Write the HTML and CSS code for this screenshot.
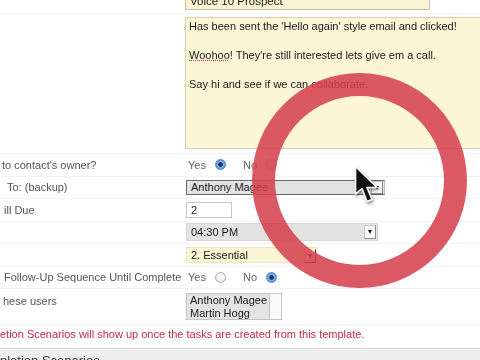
FILE: index.html
```html
<!DOCTYPE html>
<html>
<head>
  <meta charset="utf-8">
  <title>Task Template</title>
  <link rel="stylesheet" href="styles.css">
</head>
<body>
  <div class="page">
    <div class="row row-top">
      <div class="label"></div>
      <div class="field"><div class="input subject">Voice 10 Prospect</div></div>
    </div>
    <div class="row row-notes">
      <div class="label"></div>
      <div class="field">
        <div class="textarea">Has been sent the 'Hello again' style email and clicked!<br><br><span class="typo">Woohoo</span>! They're still interested lets give em a call.<br><br>Say hi and see if we can collaborate.</div>
      </div>
    </div>
    <div class="row row-std">
      <div class="label ind-2">to contact's owner?</div>
      <div class="field radios">
        <span>Yes</span><span class="radio on"></span>
        <span class="no">No</span><span class="radio"></span>
      </div>
    </div>
    <div class="row row-std">
      <div class="label ind-7">To: (backup)</div>
      <div class="field"><div class="select owner">Anthony Magee<span class="arrow">&#9662;</span></div></div>
    </div>
    <div class="row row-std">
      <div class="label ind-4">ill Due</div>
      <div class="field"><div class="input days">2</div></div>
    </div>
    <div class="row row-std">
      <div class="label"></div>
      <div class="field"><div class="select time">04:30 PM<span class="arrow">&#9662;</span></div></div>
    </div>
    <div class="row row-std">
      <div class="label"></div>
      <div class="field"><div class="select priority">2. Essential<span class="arrow">&#9662;</span></div></div>
    </div>
    <div class="row row-std">
      <div class="label ind-4">Follow-Up Sequence Until Complete</div>
      <div class="field radios">
        <span>Yes</span><span class="radio"></span>
        <span class="no">No</span><span class="radio on"></span>
      </div>
    </div>
    <div class="row row-users">
      <div class="label ind-3">hese users</div>
      <div class="field">
        <div class="listbox">
          <div class="options">Anthony Magee<br>Martin Hogg</div>
          <div class="scroll"></div>
        </div>
      </div>
    </div>
    <div class="notice">etion Scenarios will show up once the tasks are created from this template.</div>
    <div class="section-bar">pletion Scenarios</div>
  </div>

  <div class="highlight"></div>
  <svg class="cursor" width="26" height="40" viewBox="0 0 26 40">
    <path d="M1.5 1.5 L1.5 29 L8 23.5 L13 36.5 L18 34.5 L13 22.5 L23 22.5 Z" fill="#111" stroke="#fff" stroke-width="1.6" stroke-linejoin="round"/>
  </svg>
</body>
</html>
```

FILE: styles.css
```css
body {
  margin: 0;
  width: 480px;
  height: 360px;
  overflow: hidden;
  position: relative;
  background: #fff;
  color: #555;
  font-family: "Liberation Sans", Arial, sans-serif;
  font-size: 11px;
}
.page {
  margin-top: -7px;
  filter: blur(0.3px);
}
.row {
  display: flex;
  align-items: center;
  border-bottom: 1px solid #f3f3f3;
}
.label {
  box-sizing: border-box;
  width: 185px;
  flex: none;
  white-space: nowrap;
}
.ind-2 { padding-left: 2px; }
.ind-3 { padding-left: 3px; }
.ind-4 { padding-left: 4px; }
.ind-7 { padding-left: 7px; }
.field {
  flex: 1;
  display: flex;
  align-items: center;
  min-width: 0;
}
.row-top {
  height: 20px;
  align-items: flex-start;
}
.row-notes {
  padding: 3px 0 4px;
}
.row-std {
  height: 21.5px;
}
.row-users {
  padding: 4px 0;
  align-items: flex-start;
}
.row-users .label {
  padding-top: 2px;
}

.input {
  box-sizing: border-box;
  height: 17px;
  line-height: 15px;
  border: 1px solid #c4c0ad;
  background: #fff;
  color: #1a1a1a;
  padding: 0 4px;
}
.subject {
  width: 245px;
  background: #fbf4d3;
  font-size: 11.5px;
}
.days {
  width: 46px;
  height: 16px;
  line-height: 14px;
  margin-left: 1px;
  border-color: #c8c8c8;
}
.textarea {
  box-sizing: border-box;
  flex: 1;
  height: 132px;
  padding: 1px 3px;
  border: 1px solid #d4cfb4;
  border-right: none;
  background: #fcf6d6;
  color: #1a1a1a;
  line-height: 14.5px;
  white-space: nowrap;
}
.typo {
  text-decoration: underline dotted #d33;
}

.radios {
  padding-left: 3px;
  color: #666;
}
.radio {
  box-sizing: border-box;
  width: 11px;
  height: 11px;
  margin-left: 9px;
  border-radius: 50%;
  border: 1px solid #a8a8a8;
  background: radial-gradient(circle at 50% 35%, #fff, #e3e3e3);
}
.radio.on {
  border-color: #4d86c4;
  background: radial-gradient(circle, #1c3558 0 2px, #7fb3e8 2.6px, #4a8ad0 100%);
}
.no {
  margin-left: 17px;
}

.select {
  box-sizing: border-box;
  position: relative;
  height: 16px;
  line-height: 14px;
  margin-left: 1px;
  padding: 0 4px;
  border: 1px solid #d6d6d6;
  background: #e3e3e3;
  color: #1a1a1a;
}
.select .arrow {
  position: absolute;
  right: 1px;
  top: 1px;
  width: 10px;
  height: 12px;
  border: 1px solid #c4c4c4;
  border-right-color: #888;
  border-bottom-color: #888;
  background: #fbfbfb;
  color: #111;
  font-size: 8px;
  line-height: 12px;
  text-align: center;
}
.owner {
  width: 199px;
  height: 15px;
  line-height: 13px;
  border-color: #6a6a6a;
  border-right-color: #bbb;
}
.owner .arrow {
  top: 0;
  height: 11px;
  line-height: 11px;
}
.time {
  width: 192px;
  height: 18px;
  line-height: 16px;
}
.time .arrow {
  top: 1px;
}
.priority {
  width: 132px;
  background: #fbf5d3;
  border-color: #ece5c2;
}
.priority .arrow {
  background: #fbf5d3;
  border-color: #fbf5d3 #444 #444 #e0d8b4;
}

.listbox {
  box-sizing: border-box;
  display: flex;
  width: 96px;
  height: 27px;
  margin-left: 1px;
  border: 1px solid #c4c4c4;
  background: #e4e4e4;
  color: #1a1a1a;
}
.options {
  flex: 1;
  padding: 0 3px;
  line-height: 13px;
  white-space: nowrap;
  overflow: hidden;
}
.scroll {
  width: 11px;
  border-left: 1px solid #c4c4c4;
  background: #fafafa;
}

.notice {
  height: 19px;
  line-height: 19px;
  color: #c32a45;
  white-space: nowrap;
}
.section-bar {
  margin-top: 4px;
  height: 24px;
  line-height: 24px;
  border-top: 1px solid #d6d6d6;
  background: linear-gradient(#f1f1f1, #e6e6e6);
  color: #3a3a3a;
  font-size: 13px;
  white-space: nowrap;
}

.highlight {
  position: absolute;
  left: 252px;
  top: 73px;
  width: 215px;
  height: 215px;
  box-sizing: border-box;
  border-radius: 50%;
  border: 23px solid rgba(212, 62, 76, 0.86);
  filter: blur(0.7px);
}
.cursor {
  position: absolute;
  left: 354px;
  top: 165px;
  filter: drop-shadow(1px 2px 1.5px rgba(0, 0, 0, 0.45));
}
```
